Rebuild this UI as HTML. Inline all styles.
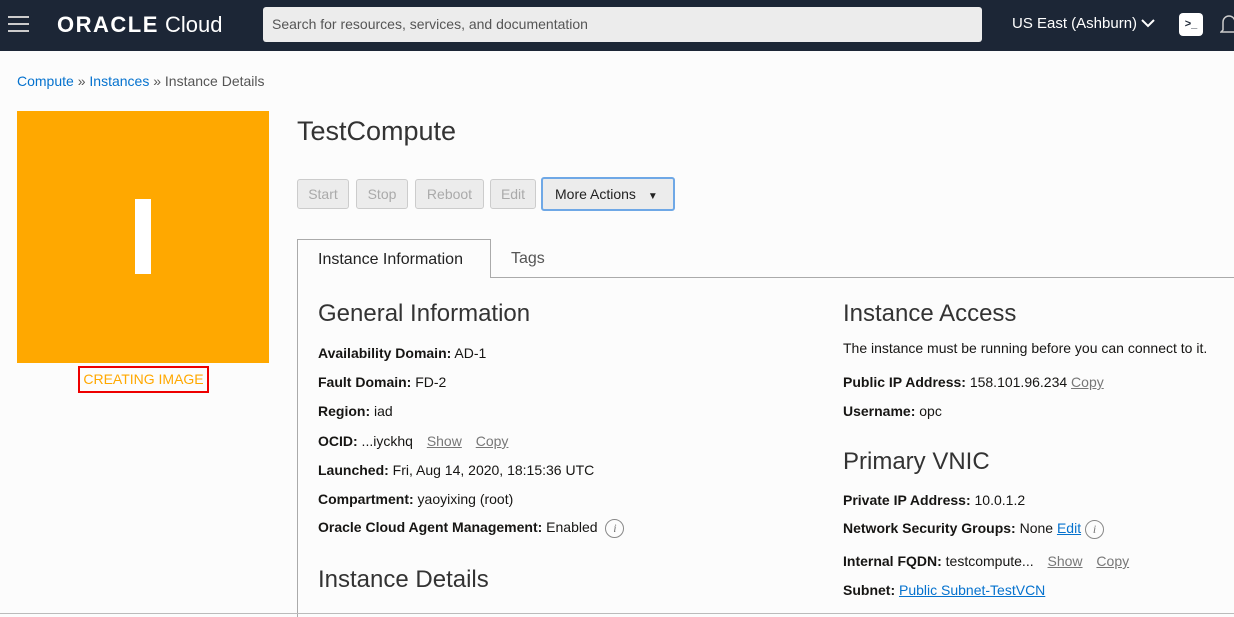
<!DOCTYPE html>
<html><head><style>
*{margin:0;padding:0;box-sizing:border-box}
body{width:1234px;height:616px;overflow:hidden;background:#fcfcfc;font-family:"Liberation Sans",sans-serif;color:#161513;position:relative}
.a{position:absolute;white-space:nowrap}
.hdr{position:absolute;left:0;top:0;width:1234px;height:51px;background:#1c2636}
.btn{position:absolute;top:179px;height:30px;border:1px solid #ccc;border-radius:3px;background:#ececec;color:#aaa;font-size:14px;text-align:center;line-height:28px}
.l{font-size:14px}
.l b{font-weight:bold}
.g{color:#777;text-decoration:underline;margin-left:10px}
.lk{color:#0572ce;text-decoration:underline}
.h2{font-size:24px;color:#333}
.i{display:inline-block;width:19px;height:19px;border:1px solid #888;border-radius:50%;font-size:12px;font-style:italic;text-align:center;line-height:17px;color:#777;vertical-align:middle;font-family:"Liberation Serif",serif;margin-left:4px}
</style></head><body>
<div class="hdr">
<div class="a" style="left:8px;top:16px;width:21px;height:2px;background:#ccc;box-shadow:0 7px 0 #ccc,0 14px 0 #ccc"></div>
<div class="a" style="left:57px;top:12px;font-size:22px;color:#fff"><span style="font-weight:bold;letter-spacing:1.5px">ORACLE</span> Cloud</div>
<div class="a" style="left:263px;top:7px;width:719px;height:35px;background:#ececec;border-radius:3px;padding:9px 9px;font-size:14px;color:#555">Search for resources, services, and documentation</div>
<div class="a" style="left:1012px;top:15px;font-size:15px;color:#fff">US East (Ashburn) <svg width="14" height="10" viewBox="0 0 14 10"><path d="M1 2l6 6 6-6" stroke="#fff" stroke-width="2" fill="none"/></svg></div>
<div class="a" style="left:1179px;top:13px;width:24px;height:23px;background:#fff;border-radius:4px;font-size:11px;font-weight:bold;color:#1c2636;text-align:center;line-height:22px">&gt;_</div>
<svg class="a" style="left:1220px;top:12px" width="16" height="24"><path d="M3 18V10a6 6 0 0112 0v8l2 2H1z" stroke="#ccc" stroke-width="1.5" fill="none"/></svg>
</div>
<div class="a" style="left:17px;top:73px;font-size:14px;color:#555"><span style="color:#0572ce">Compute</span> » <span style="color:#0572ce">Instances</span> » Instance Details</div>
<div class="a" style="left:17px;top:111px;width:252px;height:252px;background:#ffa800"></div>
<div class="a" style="left:135px;top:199px;width:16px;height:75px;background:#fff"></div>
<div class="a" style="left:78px;top:366px;width:131px;height:27px;border:2px solid #e00;color:#ffa800;font-size:14px;text-align:center;line-height:23px">CREATING IMAGE</div>
<div class="a" style="left:297px;top:116px;font-size:27px;color:#333">TestCompute</div>
<div class="btn" style="left:297px;width:52px">Start</div>
<div class="btn" style="left:356px;width:52px">Stop</div>
<div class="btn" style="left:415px;width:69px">Reboot</div>
<div class="btn" style="left:490px;width:46px">Edit</div>
<div class="btn" style="left:541px;top:177px;height:34px;width:134px;border:2px solid #6fa8e6;color:#222;line-height:30px;text-align:left;padding-left:12px">More Actions <span style="font-size:10px;margin-left:8px">▼</span></div>
<div class="a" style="left:297px;top:277px;width:937px;height:1px;background:#aaa"></div>
<div class="a" style="left:297px;top:239px;width:194px;height:39px;border:1px solid #aaa;border-bottom:none;background:#fcfcfc;font-size:16px;padding:11px 20px;color:#222">Instance Information</div>
<div class="a" style="left:511px;top:250px;font-size:16px;color:#555">Tags</div>
<div class="a" style="left:297px;top:277px;width:1px;height:340px;background:#aaa"></div>
<div class="a" style="left:0;top:613px;width:1234px;height:1px;background:#bbb"></div>
<div class="a h2" style="left:318px;top:300px">General Information</div>
<div class="a l" style="left:318px;top:345px"><b>Availability Domain:</b> AD-1</div>
<div class="a l" style="left:318px;top:374px"><b>Fault Domain:</b> FD-2</div>
<div class="a l" style="left:318px;top:403px"><b>Region:</b> iad</div>
<div class="a l" style="left:318px;top:433px"><b>OCID:</b> ...iyckhq <span class="g">Show</span> <span class="g">Copy</span></div>
<div class="a l" style="left:318px;top:462px"><b>Launched:</b> Fri, Aug 14, 2020, 18:15:36 UTC</div>
<div class="a l" style="left:318px;top:491px"><b>Compartment:</b> yaoyixing (root)</div>
<div class="a l" style="left:318px;top:519px"><b>Oracle Cloud Agent Management:</b> Enabled <span class="i">i</span></div>
<div class="a h2" style="left:318px;top:566px">Instance Details</div>
<div class="a h2" style="left:843px;top:300px">Instance Access</div>
<div class="a l" style="left:843px;top:340px">The instance must be running before you can connect to it.</div>
<div class="a l" style="left:843px;top:374px"><b>Public IP Address:</b> 158.101.96.234 <span class="g" style="margin-left:0">Copy</span></div>
<div class="a l" style="left:843px;top:403px"><b>Username:</b> opc</div>
<div class="a h2" style="left:843px;top:448px">Primary VNIC</div>
<div class="a l" style="left:843px;top:492px"><b>Private IP Address:</b> 10.0.1.2</div>
<div class="a l" style="left:843px;top:520px"><b>Network Security Groups:</b> None <span class="lk">Edit</span><span class="i">i</span></div>
<div class="a l" style="left:843px;top:553px"><b>Internal FQDN:</b> testcompute... <span class="g">Show</span> <span class="g">Copy</span></div>
<div class="a l" style="left:843px;top:582px"><b>Subnet:</b> <span class="lk">Public Subnet-TestVCN</span></div>
</body></html>
